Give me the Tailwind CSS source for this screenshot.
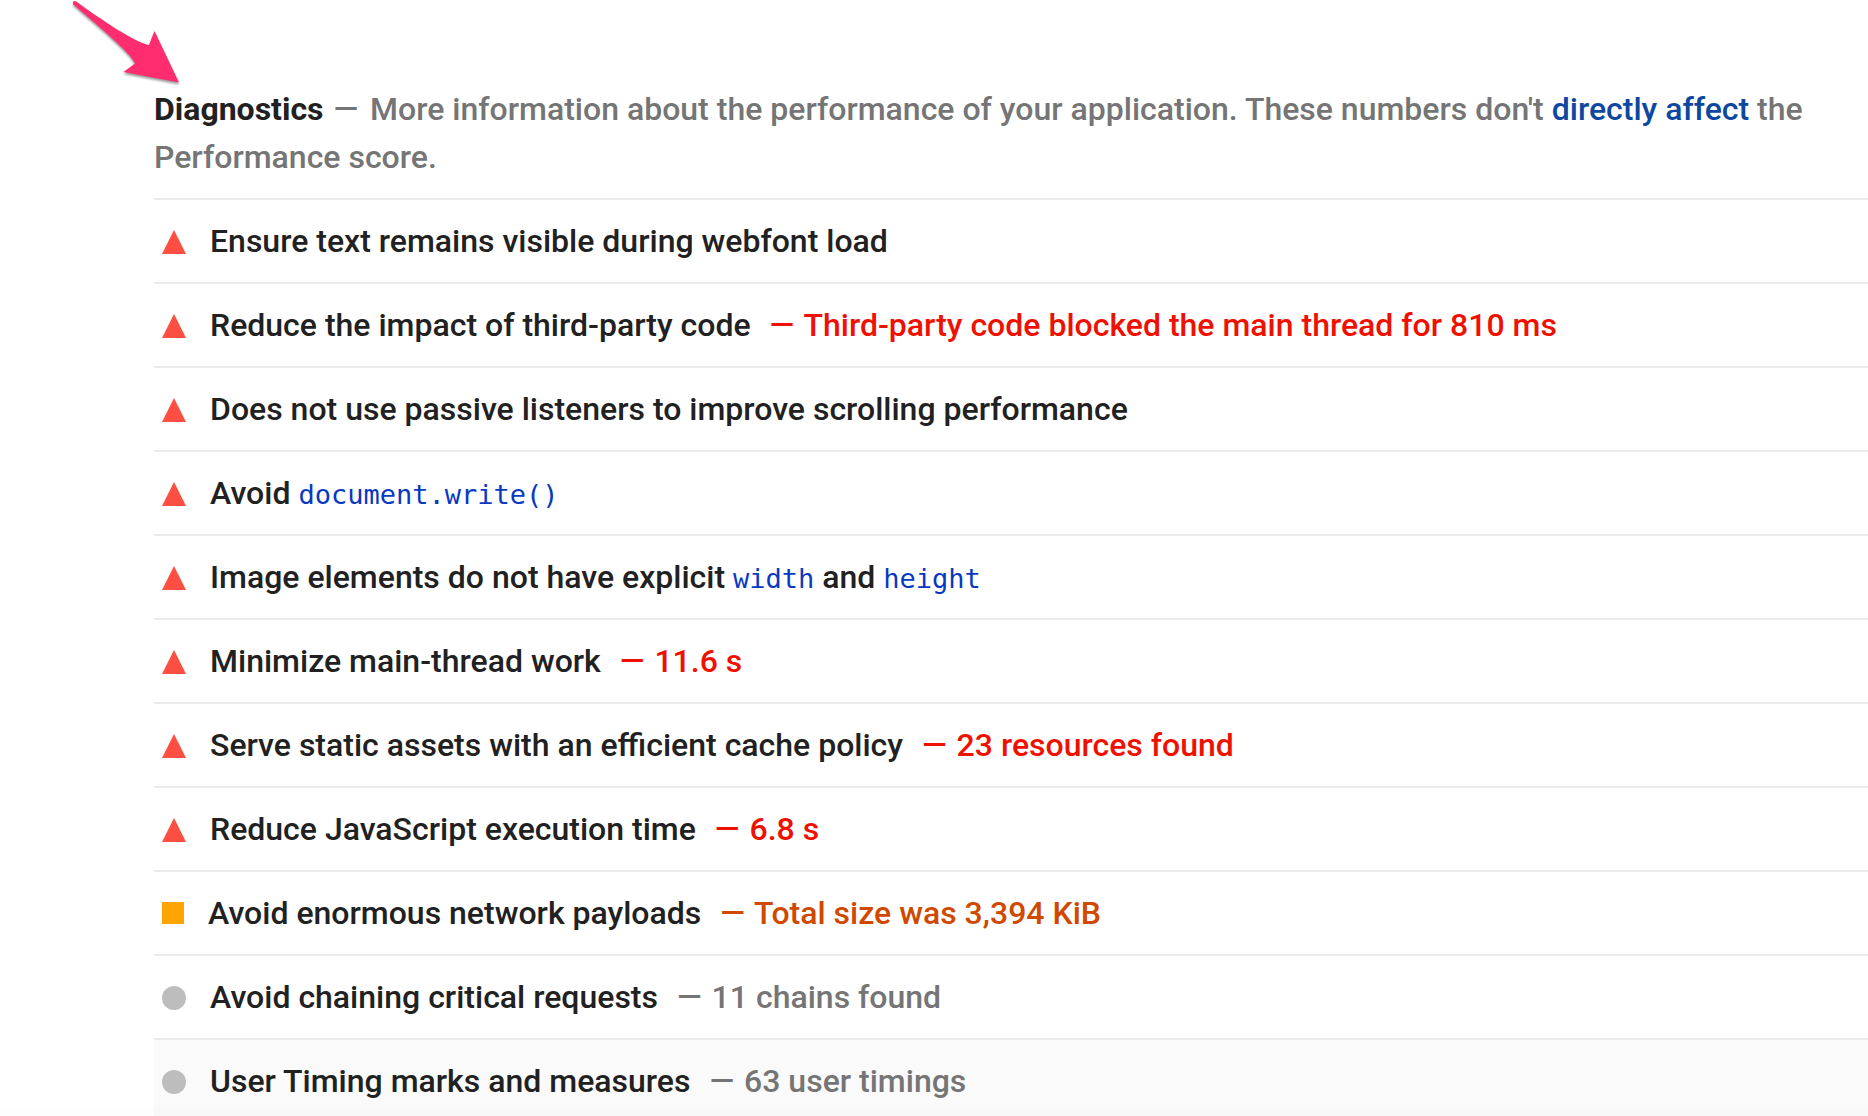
<!DOCTYPE html>
<html lang="en">
<head>
    <meta charset="UTF-8">
    <meta name="viewport" content="width=device-width, initial-scale=1.0">
    <title>Diagnostics</title>
    <script src="https://cdn.jsdelivr.net/npm/@tailwindcss/browser@4"></script>
</head>
<body class="bg-white h-screen overflow-hidden font-[Roboto,sans-serif] font-medium text-[32px] leading-[48px] text-[#212121]">
    <!-- Pointer arrow -->
    <svg class="absolute left-[68px] top-0 w-[120px] h-[92px] drop-shadow-[0_2px_1px_rgba(0,0,0,0.4)]" viewBox="0 0 120 92" fill="#ff2d6f" aria-hidden="true">
        <path d="M5 2 Q6 0 9 2 C34 20 66 42 81 45 L86.500 31 L111 82.500 L55.500 72 L67 63.500 C62 52 30 26 5 4 Z"/>
    </svg>

    <main class="pl-[154px] pt-[85px]">
        <!-- Group header -->
        <header class="pr-12 pb-[17px] text-[#757575]">
            <h1 class="inline text-[#212121] font-bold">Diagnostics</h1>
            <span class="ml-0.5 mr-1">—</span>
            More information about the performance of your application. These numbers don't
            <a href="#" class="text-[#0d47a1]">directly affect</a> the Performance score.
        </header>

        <!-- Audits -->
        <ul>
            <li class="flex items-center h-[84px] border-t-2 border-[#ebebeb] pl-2">
                <svg class="w-6 h-6 mr-6 mt-0.5" viewBox="0 0 24 24" fill="#ff4e42" aria-hidden="true"><path d="M12 0 L24 24 H0 Z"/></svg>
                <span>Ensure text remains visible during webfont load</span>
            </li>
            <li class="flex items-center h-[84px] border-t-2 border-[#ebebeb] pl-2">
                <svg class="w-6 h-6 mr-6 mt-0.5" viewBox="0 0 24 24" fill="#ff4e42" aria-hidden="true"><path d="M12 0 L24 24 H0 Z"/></svg>
                <span>Reduce the impact of third-party code</span>
                <span class="ml-[19px] text-[#f01000]"><span class="mr-0.5">—</span> Third-party code blocked the main thread for 810 ms</span>
            </li>
            <li class="flex items-center h-[84px] border-t-2 border-[#ebebeb] pl-2">
                <svg class="w-6 h-6 mr-6 mt-0.5" viewBox="0 0 24 24" fill="#ff4e42" aria-hidden="true"><path d="M12 0 L24 24 H0 Z"/></svg>
                <span>Does not use passive listeners to improve scrolling performance</span>
            </li>
            <li class="flex items-center h-[84px] border-t-2 border-[#ebebeb] pl-2">
                <svg class="w-6 h-6 mr-6 mt-0.5" viewBox="0 0 24 24" fill="#ff4e42" aria-hidden="true"><path d="M12 0 L24 24 H0 Z"/></svg>
                <span>Avoid <code class="font-['DejaVu_Sans_Mono',monospace] font-normal text-[27px] leading-none text-[#0938c2]">document.write()</code></span>
            </li>
            <li class="flex items-center h-[84px] border-t-2 border-[#ebebeb] pl-2">
                <svg class="w-6 h-6 mr-6 mt-0.5" viewBox="0 0 24 24" fill="#ff4e42" aria-hidden="true"><path d="M12 0 L24 24 H0 Z"/></svg>
                <span>Image elements do not have explicit <code class="font-['DejaVu_Sans_Mono',monospace] font-normal text-[27px] leading-none text-[#0938c2]">width</code> and <code class="font-['DejaVu_Sans_Mono',monospace] font-normal text-[27px] leading-none text-[#0938c2]">height</code></span>
            </li>
            <li class="flex items-center h-[84px] border-t-2 border-[#ebebeb] pl-2">
                <svg class="w-6 h-6 mr-6 mt-0.5" viewBox="0 0 24 24" fill="#ff4e42" aria-hidden="true"><path d="M12 0 L24 24 H0 Z"/></svg>
                <span>Minimize main-thread work</span>
                <span class="ml-[19px] text-[#f01000]"><span class="mr-0.5">—</span> 11.6 s</span>
            </li>
            <li class="flex items-center h-[84px] border-t-2 border-[#ebebeb] pl-2">
                <svg class="w-6 h-6 mr-6 mt-0.5" viewBox="0 0 24 24" fill="#ff4e42" aria-hidden="true"><path d="M12 0 L24 24 H0 Z"/></svg>
                <span>Serve static assets with an efficient cache policy</span>
                <span class="ml-[19px] text-[#f01000]"><span class="mr-0.5">—</span> 23 resources found</span>
            </li>
            <li class="flex items-center h-[84px] border-t-2 border-[#ebebeb] pl-2">
                <svg class="w-6 h-6 mr-6 mt-0.5" viewBox="0 0 24 24" fill="#ff4e42" aria-hidden="true"><path d="M12 0 L24 24 H0 Z"/></svg>
                <span>Reduce JavaScript execution time</span>
                <span class="ml-[19px] text-[#f01000]"><span class="mr-0.5">—</span> 6.8 s</span>
            </li>
            <li class="flex items-center h-[84px] border-t-2 border-[#ebebeb] pl-2">
                <span class="size-[22px] mr-6 bg-[#ffa400]"></span>
                <span>Avoid enormous network payloads</span>
                <span class="ml-[19px] text-[#d04900]"><span class="mr-0.5">—</span> Total size was 3,394 KiB</span>
            </li>
            <li class="flex items-center h-[84px] border-t-2 border-[#ebebeb] pl-2">
                <span class="size-6 mr-6 mt-0.5 rounded-full bg-[#bdbdbd]"></span>
                <span>Avoid chaining critical requests</span>
                <span class="ml-[19px] text-[#757575]"><span class="mr-0.5">—</span> 11 chains found</span>
            </li>
            <li class="flex items-center h-[84px] border-t-2 border-[#ebebeb] pl-2 bg-[#fafafa]">
                <span class="size-6 mr-6 mt-0.5 rounded-full bg-[#bdbdbd]"></span>
                <span>User Timing marks and measures</span>
                <span class="ml-[19px] text-[#757575]"><span class="mr-0.5">—</span> 63 user timings</span>
            </li>
        </ul>
    </main>

    <!-- Faint shade along the bottom edge -->
    <div class="fixed inset-x-0 bottom-0 h-4 bg-linear-to-t from-black/1 to-transparent pointer-events-none"></div>
</body>
</html>
